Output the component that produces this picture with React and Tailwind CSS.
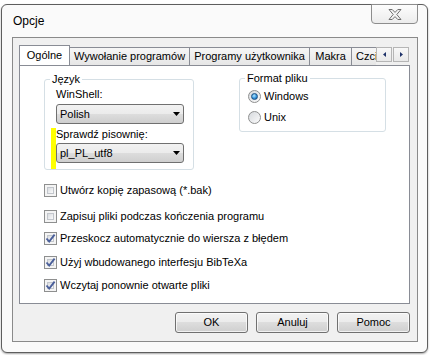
import React from 'react';

const tabs = [
  { label: 'Wywołanie programów', w: 'w-[120px] justify-center' },
  { label: 'Programy użytkownika', w: 'w-[120px] justify-center' },
  { label: 'Makra', w: 'w-[42px] justify-center' },
  { label: 'Czcionki', w: 'w-[56px] pl-[4px]' },
];

const options = [
  { label: 'Utwórz kopię zapasową (*.bak)', checked: false, mt: 'mt-[12px]' },
  { label: 'Zapisuj pliki podczas kończenia programu', checked: false, mt: 'mt-[10px]' },
  { label: 'Przeskocz automatycznie do wiersza z błędem', checked: true, mt: 'mt-[6px]' },
  { label: 'Użyj wbudowanego interfesju BibTeXa', checked: true, mt: 'mt-[8px]' },
  { label: 'Wczytaj ponownie otwarte pliki', checked: true, mt: 'mt-[7px]' },
];

function Checkbox({ checked }) {
  return (
    <span className="w-[13px] h-[13px] shrink-0 border border-[#8e8f8f] bg-[#f4f4f4] p-[2px] flex">
      <span className="flex-1 border border-[#c2c6cc] bg-gradient-to-br from-[#d9dce0] to-[#fbfbfb] flex items-center justify-center">
        {checked && (
          <svg width="11" height="11" viewBox="0 0 11 11" className="-m-[3px] shrink-0">
            <path d="M1.5 5.5 L4.2 8.6 L9.6 1.6" fill="none" stroke="#4a5f9a" strokeWidth="1.9" />
          </svg>
        )}
      </span>
    </span>
  );
}

function Radio({ checked }) {
  return (
    <span className="w-[13px] h-[13px] shrink-0 rounded-full border border-[#8e8f8f] bg-gradient-to-br from-[#d6d9dd] to-[#fbfbfb] flex items-center justify-center">
      {checked && (
        <span className="w-[7px] h-[7px] rounded-full border border-[#1b4f82] bg-[radial-gradient(circle_at_40%_35%,#b4e7ff,#3493dc_55%,#175a98)]" />
      )}
    </span>
  );
}

function Combo({ value }) {
  return (
    <div className="w-[128px] h-[20px] rounded-[3px] border border-[#707070] bg-[linear-gradient(#f2f2f2,#ebebeb_50%,#dddddd_50%,#cfcfcf)] flex items-center justify-between pl-[3px] pr-[3px]">
      <span>{value}</span>
      <svg width="7" height="4" viewBox="0 0 7 4">
        <path d="M0 0 H7 L3.5 4 Z" fill="#000" />
      </svg>
    </div>
  );
}

function Button({ children }) {
  return (
    <button className="w-[73px] h-[21px] rounded-[3px] border border-[#707070] bg-[linear-gradient(#f2f2f2,#ebebeb_50%,#dddddd_50%,#cfcfcf)] leading-[15px] shadow-[inset_0_0_0_1px_rgba(255,255,255,0.7)]">
      {children}
    </button>
  );
}

export default function App() {
  return (
    <div className="w-[435px] h-[355px] bg-white pt-[4px] pl-[1px] font-['Liberation_Sans',Arial,sans-serif] text-[11px] leading-[15px] text-black">
      <div className="w-[427px] h-[349px] rounded-[6px] border border-[#5e5e5e] bg-[#fafafa] shadow-[0_1px_2px_rgba(0,0,0,0.35)] flex flex-col">
        {/* Pasek tytułu */}
        <div className="h-[32px] flex items-start">
          <span className="pl-[11px] pt-[9px] text-[12px]">Opcje</span>
          <div className="ml-auto mr-[9px] -mt-px w-[47px] h-[20px] rounded-b-[4px] border border-[#8d8d8d] bg-gradient-to-b from-[#fdfdfd] to-[#ececec] flex items-center justify-center">
            <svg width="14" height="11" viewBox="0 0 14 11">
              <path d="M1 0.5 H4.2 L7 3.4 L9.8 0.5 H13 L8.8 5.5 L13 10.5 H9.8 L7 7.6 L4.2 10.5 H1 L5.2 5.5 Z" fill="#f3f3f3" stroke="#707070" strokeWidth="1" strokeLinejoin="round" />
            </svg>
          </div>
        </div>

        {/* Obszar klienta */}
        <div className="ml-[10px] w-[406px] h-[305px] border border-[#8a8a8a] bg-[#f0f0f0] pl-[6px] pt-[7px]">
          {/* Zakładki */}
          <div className="w-[391px] h-[20px] flex items-end">
            <div className="w-[357px] h-[20px] flex items-end overflow-hidden">
              <div className="w-[51px] h-[21px] -mb-px shrink-0 border border-b-0 border-[#898c95] bg-white flex items-center justify-center pb-[2px]">
                Ogólne
              </div>
              {tabs.map((t) => (
                <div
                  key={t.label}
                  className={`${t.w} h-[18px] shrink-0 border-t border-r border-[#898c95] bg-gradient-to-b from-[#f6f6f6] to-[#e6e6e6] flex items-center whitespace-nowrap`}
                >
                  {t.label}
                </div>
              ))}
            </div>
            <div className="self-start mt-[2px] flex">
              <div className="w-[16px] h-[15px] border border-[#b5b5b5] bg-gradient-to-b from-[#f8f8f8] to-[#e9e9e9] flex items-center justify-center">
                <svg width="3" height="5" viewBox="0 0 3 5"><path d="M3 0 V5 L0 2.5 Z" fill="#1e3269" /></svg>
              </div>
              <div className="w-[16px] h-[15px] ml-[1px] border border-[#b5b5b5] bg-gradient-to-b from-[#f8f8f8] to-[#e9e9e9] flex items-center justify-center">
                <svg width="3" height="5" viewBox="0 0 3 5"><path d="M0 0 V5 L3 2.5 Z" fill="#1e3269" /></svg>
              </div>
            </div>
          </div>

          {/* Panel zakładki */}
          <div className="w-[391px] h-[239px] border border-[#898c95] bg-white pl-[24px] pt-[6px]">
            <div className="flex items-start gap-[45px]">
              <fieldset className="w-[150px] border border-[#d5dfe5] rounded-[3px] pl-[6px] pb-0">
                <legend className="-ml-px px-[2px]">Język</legend>
                <div className="ml-[5px]">
                  <div>WinShell:</div>
                  <div className="mt-[2px]">
                    <Combo value="Polish" />
                  </div>
                </div>
                <div className="flex items-start">
                  <div className="w-[5px] h-[41px] mt-[4px] bg-[#ffff00]" />
                  <div className="mt-[3px]">
                    <div>Sprawdź pisownię:</div>
                    <div className="mt-[1px]">
                      <Combo value="pl_PL_utf8" />
                    </div>
                  </div>
                </div>
              </fieldset>

              <fieldset className="-mt-px w-[147px] border border-[#d5dfe5] rounded-[3px] pl-[8px] pb-[6px]">
                <legend className="-ml-[3px] px-[2px]">Format pliku</legend>
                <label className="mt-[3px] flex items-center gap-[3px]">
                  <Radio checked />
                  <span>Windows</span>
                </label>
                <label className="mt-[6px] flex items-center gap-[3px]">
                  <Radio />
                  <span>Unix</span>
                </label>
              </fieldset>
            </div>

            <div className="flex flex-col">
              {options.map((o) => (
                <label key={o.label} className={`${o.mt} h-[16px] flex items-center gap-[3px]`}>
                  <Checkbox checked={o.checked} />
                  <span>{o.label}</span>
                </label>
              ))}
            </div>
          </div>

          {/* Przyciski */}
          <div className="w-[391px] mt-[8px] flex justify-end gap-[8px]">
            <Button>OK</Button>
            <Button>Anuluj</Button>
            <Button>Pomoc</Button>
          </div>
        </div>
      </div>
    </div>
  );
}
